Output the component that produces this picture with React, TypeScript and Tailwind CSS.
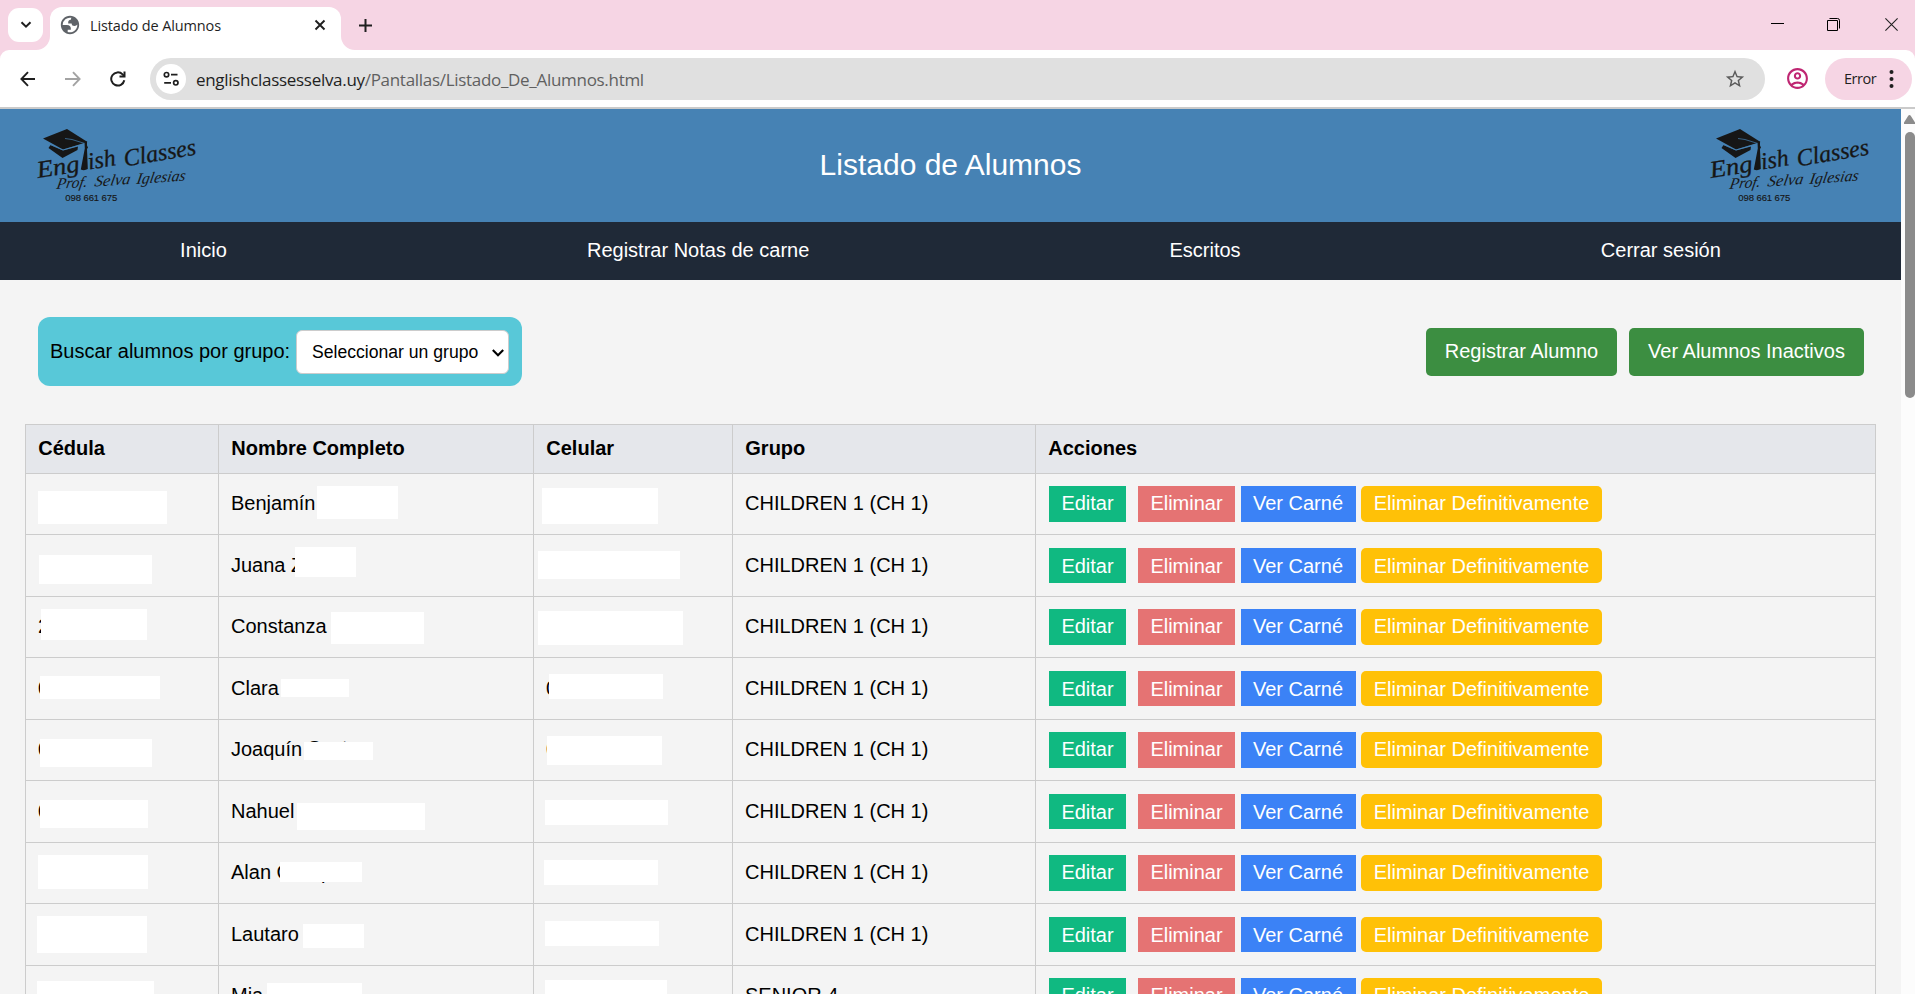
import React from "react";
import { MdStarBorder, MdOutlineAccountCircle } from "react-icons/md";

type Cell = { text?: React.ReactNode; mask: string };
type Student = { id: Cell; name: Cell; phone: Cell; group: string };

const students: Student[] = [
  {
    id: { mask: "left-[12px] top-[17px] w-[129px] h-[33px]" },
    name: { text: "Benjamín", mask: "left-[98px] top-[12px] w-[81px] h-[33px]" },
    phone: { mask: "left-[8px] top-[14px] w-[116px] h-[36px]" },
    group: "CHILDREN 1 (CH 1)",
  },
  {
    id: { mask: "left-[13px] top-[20px] w-[113px] h-[29px]" },
    name: { text: "Juana Z", mask: "left-[76px] top-[12px] w-[61px] h-[30px]" },
    phone: { mask: "left-[4px] top-[16px] w-[142px] h-[28px]" },
    group: "CHILDREN 1 (CH 1)",
  },
  {
    id: { text: "2", mask: "left-[15px] top-[12px] w-[106px] h-[31px]" },
    name: { text: "Constanza", mask: "left-[112px] top-[15px] w-[93px] h-[32px]" },
    phone: { mask: "left-[4px] top-[14px] w-[145px] h-[34px]" },
    group: "CHILDREN 1 (CH 1)",
  },
  {
    id: { text: "0", mask: "left-[14px] top-[18px] w-[120px] h-[23px]" },
    name: { text: "Clara", mask: "left-[62px] top-[21px] w-[68px] h-[18px]" },
    phone: { text: "0", mask: "left-[15px] top-[16px] w-[114px] h-[25px]" },
    group: "CHILDREN 1 (CH 1)",
  },
  {
    id: { text: "0", mask: "left-[14px] top-[19px] w-[112px] h-[28px]" },
    name: {
      text: (
        <>
          Joaquín <span className="relative -top-px">S</span>
          <span className="relative -top-px ml-[21px]">t</span>
        </>
      ),
      mask: "left-[85px] top-[22px] w-[69px] h-[18px]",
    },
    phone: { text: "0", mask: "left-[13px] top-[16px] w-[115px] h-[29px]" },
    group: "CHILDREN 1 (CH 1)",
  },
  {
    id: { text: "0", mask: "left-[14px] top-[19px] w-[108px] h-[28px]" },
    name: { text: "Nahuel", mask: "left-[78px] top-[22px] w-[128px] h-[27px]" },
    phone: { mask: "left-[11px] top-[19px] w-[123px] h-[25px]" },
    group: "CHILDREN 1 (CH 1)",
  },
  {
    id: { mask: "left-[12px] top-[12px] w-[110px] h-[34px]" },
    name: {
      text: (
        <>
          Alan C<span className="ml-[30px]">p</span>
        </>
      ),
      mask: "left-[61px] top-[19px] w-[82px] h-[20px]",
    },
    phone: { mask: "left-[10px] top-[17px] w-[114px] h-[25px]" },
    group: "CHILDREN 1 (CH 1)",
  },
  {
    id: { mask: "left-[11px] top-[12px] w-[110px] h-[37px]" },
    name: { text: "Lautaro", mask: "left-[84px] top-[20px] w-[61px] h-[24px]" },
    phone: { mask: "left-[11px] top-[17px] w-[114px] h-[25px]" },
    group: "CHILDREN 1 (CH 1)",
  },
  {
    id: { mask: "left-[11px] top-[15px] w-[117px] h-[36px]" },
    name: { text: "Mia", mask: "left-[48px] top-[17px] w-[95px] h-[36px]" },
    phone: { mask: "left-[11px] top-[14px] w-[122px] h-[36px]" },
    group: "SENIOR 4",
  },
];

const columns = "grid grid-cols-[193px_315px_199px_303px_840px]";

function BrowserTabs() {
  return (
    <div className="flex h-[50px] items-start bg-[#f6d5e4]">
      <div className="ml-2 mt-2 flex h-[34px] w-[35px] items-center justify-center rounded-[11px] bg-white">
        <svg width="12" height="8" viewBox="0 0 12 8" fill="none" stroke="#1f1f1f" strokeWidth="2">
          <path d="M1.5 1.2 6 5.7l4.500-4.500" />
        </svg>
      </div>
      <div className="relative ml-[7px] mt-[7px] flex h-[43px] w-[291px] items-center rounded-t-[12px] bg-white">
        <svg className="absolute bottom-0 -left-[14px]" width="14" height="14" viewBox="0 0 14 14">
          <path d="M14 0v14H0A14 14 0 0 0 14 0Z" fill="#fff" />
        </svg>
        <svg className="absolute bottom-0 -right-[14px]" width="14" height="14" viewBox="0 0 14 14">
          <path d="M0 0v14h14A14 14 0 0 1 0 0Z" fill="#fff" />
        </svg>
        <svg className="mb-[7px] ml-[9px]" width="22" height="22" viewBox="0 0 24 24" fill="#5f6368">
          <path
            fillRule="evenodd"
            d="M12 2C6.480 2 2 6.480 2 12s4.480 10 10 10 10-4.480 10-10S17.520 2 12 2ZM4 12h4.400c3.407.022 4.922 1.730 4.543 5.127H9.488v2.470a8.004 8.004 0 0 0 10.498-8.083C19.327 12.504 18.332 13 17 13c-2.137 0-3.206-.916-3.206-2.750h-3.748c-.274-2.728.683-4.092 2.870-4.092 0-.975.327-1.597.811-1.970A8.004 8.004 0 0 0 4 12Z"
          />
        </svg>
        <span className="mb-[5px] ml-[9px] w-[180px] whitespace-nowrap font-['Open_Sans',sans-serif] text-[14.5px] tracking-[-0.12px] text-[#1f1f1f]">
          Listado de Alumnos
        </span>
        <svg className="mb-[7px] ml-[44px]" width="12" height="12" viewBox="0 0 12 12" stroke="#1f1f1f" strokeWidth="1.900">
          <path d="m1.500 1.500 9 9m0-9-9 9" />
        </svg>
      </div>
      <svg className="ml-[18px] mt-[19px]" width="13" height="13" viewBox="0 0 13 13" stroke="#1f1f1f" strokeWidth="2">
        <path d="M6.500 0v13M0 6.500h13" />
      </svg>
      <div className="ml-auto mr-[17px] mt-[18px] flex items-center">
        <svg width="13" height="13" viewBox="0 0 13 13">
          <path d="M0 5.500h13" stroke="#000" />
        </svg>
        <svg className="ml-[43px]" width="13" height="13" viewBox="0 0 13 13" fill="none" stroke="#000">
          <path d="M.5 2.500h10v10H.5z" />
          <path d="M2.500.5h8a2 2 0 0 1 2 2v8" />
        </svg>
        <svg className="ml-[45px]" width="13" height="13" viewBox="0 0 13 13" stroke="#222" strokeWidth="1.100">
          <path d="m.4.4 12.200 12.200m0-12.200L.4 12.600" />
        </svg>
      </div>
    </div>
  );
}

function Toolbar() {
  return (
    <div className="bg-[#f6d5e4]">
      <div className="flex h-[57px] items-center rounded-t-[9px] bg-white">
        <svg className="ml-[20px]" width="16" height="16" viewBox="0 0 16 16" fill="none" stroke="#1f1f1f" strokeWidth="1.900">
          <path d="M15 8H1.600M8 1.200 1.400 8 8 14.800" />
        </svg>
        <svg className="ml-[29px]" width="16" height="16" viewBox="0 0 16 16" fill="none" stroke="#a3a3a3" strokeWidth="1.900">
          <path d="M0 8h13.800M8 1.200 14.600 8 8 14.800" />
        </svg>
        <svg className="ml-[29px]" width="17" height="16" viewBox="0 0 17 16" fill="none" stroke="#1f1f1f" strokeWidth="2">
          <path d="M14.300 9.300A6.600 6.600 0 1 1 12.600 3.400L14.300 5.100" />
          <path d="M14.500.6v5H9.500" />
        </svg>
        <div className="ml-[23px] flex h-[42px] w-[1615px] items-center rounded-full bg-[#e0e0e0] pl-[6px]">
          <div className="flex size-[30px] items-center justify-center rounded-full bg-white">
            <svg width="16" height="16" viewBox="0 0 16 16" fill="none" stroke="#1f1f1f" strokeWidth="1.700">
              <circle cx="3.500" cy="3.700" r="2.200" />
              <path d="M8 3.700h6.500M1.200 11.800H8" />
              <circle cx="12.800" cy="11.800" r="2.200" />
            </svg>
          </div>
          <span className="ml-[10px] mt-[2px] whitespace-nowrap font-['Open_Sans',sans-serif] text-[17px] tracking-[-0.3px] text-[#1f1f1f]">
            englishclassesselva.uy<span className="text-[#606060]">/Pantallas/Listado_De_Alumnos.html</span>
          </span>
          <MdStarBorder className="ml-auto mr-[19px]" size={22} color="#5a5a5a" />
        </div>
        <MdOutlineAccountCircle className="ml-[20px]" size={25} color="#bf2672" />
        <div className="ml-[15px] flex h-[42px] w-[87px] items-center rounded-full bg-[#f6d5e4] pl-[19px]">
          <span className="mt-px font-['Open_Sans',sans-serif] text-[14.5px] tracking-[-0.5px] text-[#1f1f1f]">Error</span>
          <svg className="ml-auto mr-[18px]" width="5" height="18" viewBox="0 0 5 18" fill="#1f1f1f">
            <circle cx="2.500" cy="2" r="2" />
            <circle cx="2.500" cy="9" r="2" />
            <circle cx="2.500" cy="16" r="2" />
          </svg>
        </div>
      </div>
      <div className="h-[2px] bg-[#cacaca]" />
    </div>
  );
}

function Logo() {
  return (
    <svg className="h-[75px] w-[165px]" viewBox="0 0 165 75" fill="#161616">
      <path d="M7 9.500 31 0 51.500 13 27 20.500Z" />
      <path d="M14.500 16 27 21.500 42 17.500 41.500 21 26.500 29 12.500 19Z" />
      <path d="M14 15.500 27 21 45 15.800" fill="none" stroke="#4682b4" strokeWidth=".6" />
      <path d="M29 9.500 36 10.500 50.500 15" fill="none" stroke="#4682b4" strokeWidth=".7" />
      <path d="M48.500 12.500h2.500v4l1 2-1 1.500 .8 20q-3.500 2-7 .5L48.800 19.500Z" />
      <g fontFamily="'Liberation Serif', serif" fontStyle="italic">
        <g fontSize="24" stroke="#161616" strokeWidth=".3">
          <text transform="translate(2 49) rotate(-9)" textLength="43" lengthAdjust="spacingAndGlyphs">Eng</text>
          <text transform="translate(53 40.500) rotate(-9)" textLength="28" lengthAdjust="spacingAndGlyphs">ish</text>
          <text transform="translate(89 37.500) rotate(-9.500)" textLength="73" lengthAdjust="spacingAndGlyphs">Classes</text>
        </g>
        <g fontSize="15.500">
          <text transform="translate(20 60) rotate(-4) skewX(-14)" textLength="31" lengthAdjust="spacingAndGlyphs">Prof.</text>
          <text transform="translate(58 57.500) rotate(-4) skewX(-14)" textLength="36" lengthAdjust="spacingAndGlyphs">Selva</text>
          <text transform="translate(100 55) rotate(-4) skewX(-14)" textLength="49" lengthAdjust="spacingAndGlyphs">Iglesias</text>
        </g>
      </g>
      <text x="29.300" y="72" fontFamily="'Liberation Sans', sans-serif" fontSize="9.500" textLength="52" stroke="#161616" strokeWidth=".15">
        098 661 675
      </text>
    </svg>
  );
}

function SiteHeader() {
  return (
    <>
      <header className="flex h-[113px] items-start justify-between bg-[#4682b4] pl-[36px] pr-[27px] pt-[20px]">
        <Logo />
        <h1 className="mr-[9px] mt-[13px] text-[30px] leading-[45px] text-white">Listado de Alumnos</h1>
        <Logo />
      </header>
      <nav className="flex h-[58px] items-center justify-around bg-[#1f2937] pb-[2px] text-white">
        <a>Inicio</a>
        <a>Registrar Notas de carne</a>
        <a>Escritos</a>
        <a>Cerrar sesión</a>
      </nav>
    </>
  );
}

function SearchBar() {
  return (
    <div className="mt-[37px] flex h-[69px] items-center pl-[38px] pr-[37px]">
      <div className="flex h-[69px] w-[484px] items-center rounded-[12px] bg-[#58c8d8] pl-[12px]">
        <span className="mb-px w-[246px] whitespace-nowrap">Buscar alumnos por grupo:</span>
        <div className="mt-px flex h-[44px] w-[213px] items-center rounded-[6px] border border-[#ccc] bg-white pl-[15px]">
          <span className="w-[166px] whitespace-nowrap text-[17.600px]">Seleccionar un grupo</span>
          <svg className="ml-[14px] mt-[2px]" width="12" height="8" viewBox="0 0 12 8" fill="none" stroke="#000" strokeWidth="2.100">
            <path d="M.8 1 6 6.200 11.200 1" />
          </svg>
        </div>
      </div>
      <div className="ml-auto mt-px flex gap-3 text-white">
        <button className="h-[48px] w-[191px] rounded-[5px] bg-[#3c8e41] pb-[2px]">Registrar Alumno</button>
        <button className="h-[48px] w-[235px] rounded-[5px] bg-[#3c8e41] pb-[2px]">Ver Alumnos Inactivos</button>
      </div>
    </div>
  );
}

function MaskedCell({ cell }: { cell: Cell }) {
  return (
    <div className="relative border-r border-[#ccc] pl-[12px]">
      {cell.text}
      <div className={`absolute bg-white ${cell.mask}`} />
    </div>
  );
}

function StudentTable() {
  return (
    <div className="ml-[25px] mt-[38px] w-[1851px] border-l border-t border-[#ccc] leading-[30px]">
      <div className={`${columns} h-[49px] border-b border-[#ccc] bg-[#e5e7eb] font-bold`}>
        {["Cédula", "Nombre Completo", "Celular", "Grupo", "Acciones"].map((title) => (
          <div key={title} className="border-r border-[#ccc] pl-[12.300px] pt-[8px]">
            {title}
          </div>
        ))}
      </div>
      {students.map((s, i) => (
        <div
          key={i}
          className={`${columns} border-b border-[#ccc] ${i % 2 ? "h-[62px] leading-[60px]" : "h-[61px] leading-[58px]"}`}
        >
          <MaskedCell cell={s.id} />
          <MaskedCell cell={s.name} />
          <MaskedCell cell={s.phone} />
          <div className="border-r border-[#ccc] pl-[12px]">{s.group}</div>
          <div
            className={`flex border-r border-[#ccc] pl-[13px] text-white ${
              i % 2 ? "pb-[13px] pt-[13px] leading-[34px]" : "pb-[12px] pt-[12px] leading-[34px] [&>button]:pb-[2px]"
            }`}
          >
            <button className="w-[77px] bg-[#10b981]">Editar</button>
            <button className="ml-[12px] w-[97px] bg-[#e57373]">Eliminar</button>
            <button className="ml-[6px] w-[115px] bg-[#3b82f6] pr-px">Ver Carné</button>
            <button className="ml-[5px] w-[241px] rounded-[5px] bg-[#ffc107]">Eliminar Definitivamente</button>
          </div>
        </div>
      ))}
    </div>
  );
}

export default function App() {
  return (
    <div className="flex h-[994px] w-[1915px] flex-col overflow-hidden bg-[#f4f4f4] font-['Liberation_Sans',Arial,sans-serif] text-[20px] text-black">
      <BrowserTabs />
      <Toolbar />
      <div className="flex h-[885px]">
        <main className="w-[1901px] overflow-hidden">
          <SiteHeader />
          <SearchBar />
          <StudentTable />
        </main>
        <div className="flex w-[14px] flex-col items-end bg-[#fcfcfc] pt-[6px]">
          <svg width="11" height="9" viewBox="0 0 11 9" fill="#8b8b8b">
            <path d="M5.500 0q.8 0 1.400 1L11 7.500V9H0V7.500L4.100 1Q4.700 0 5.500 0Z" />
          </svg>
          <div className="mt-[8px] h-[266px] w-[10px] rounded-[5px] bg-[#8b8b8b]" />
        </div>
      </div>
    </div>
  );
}
